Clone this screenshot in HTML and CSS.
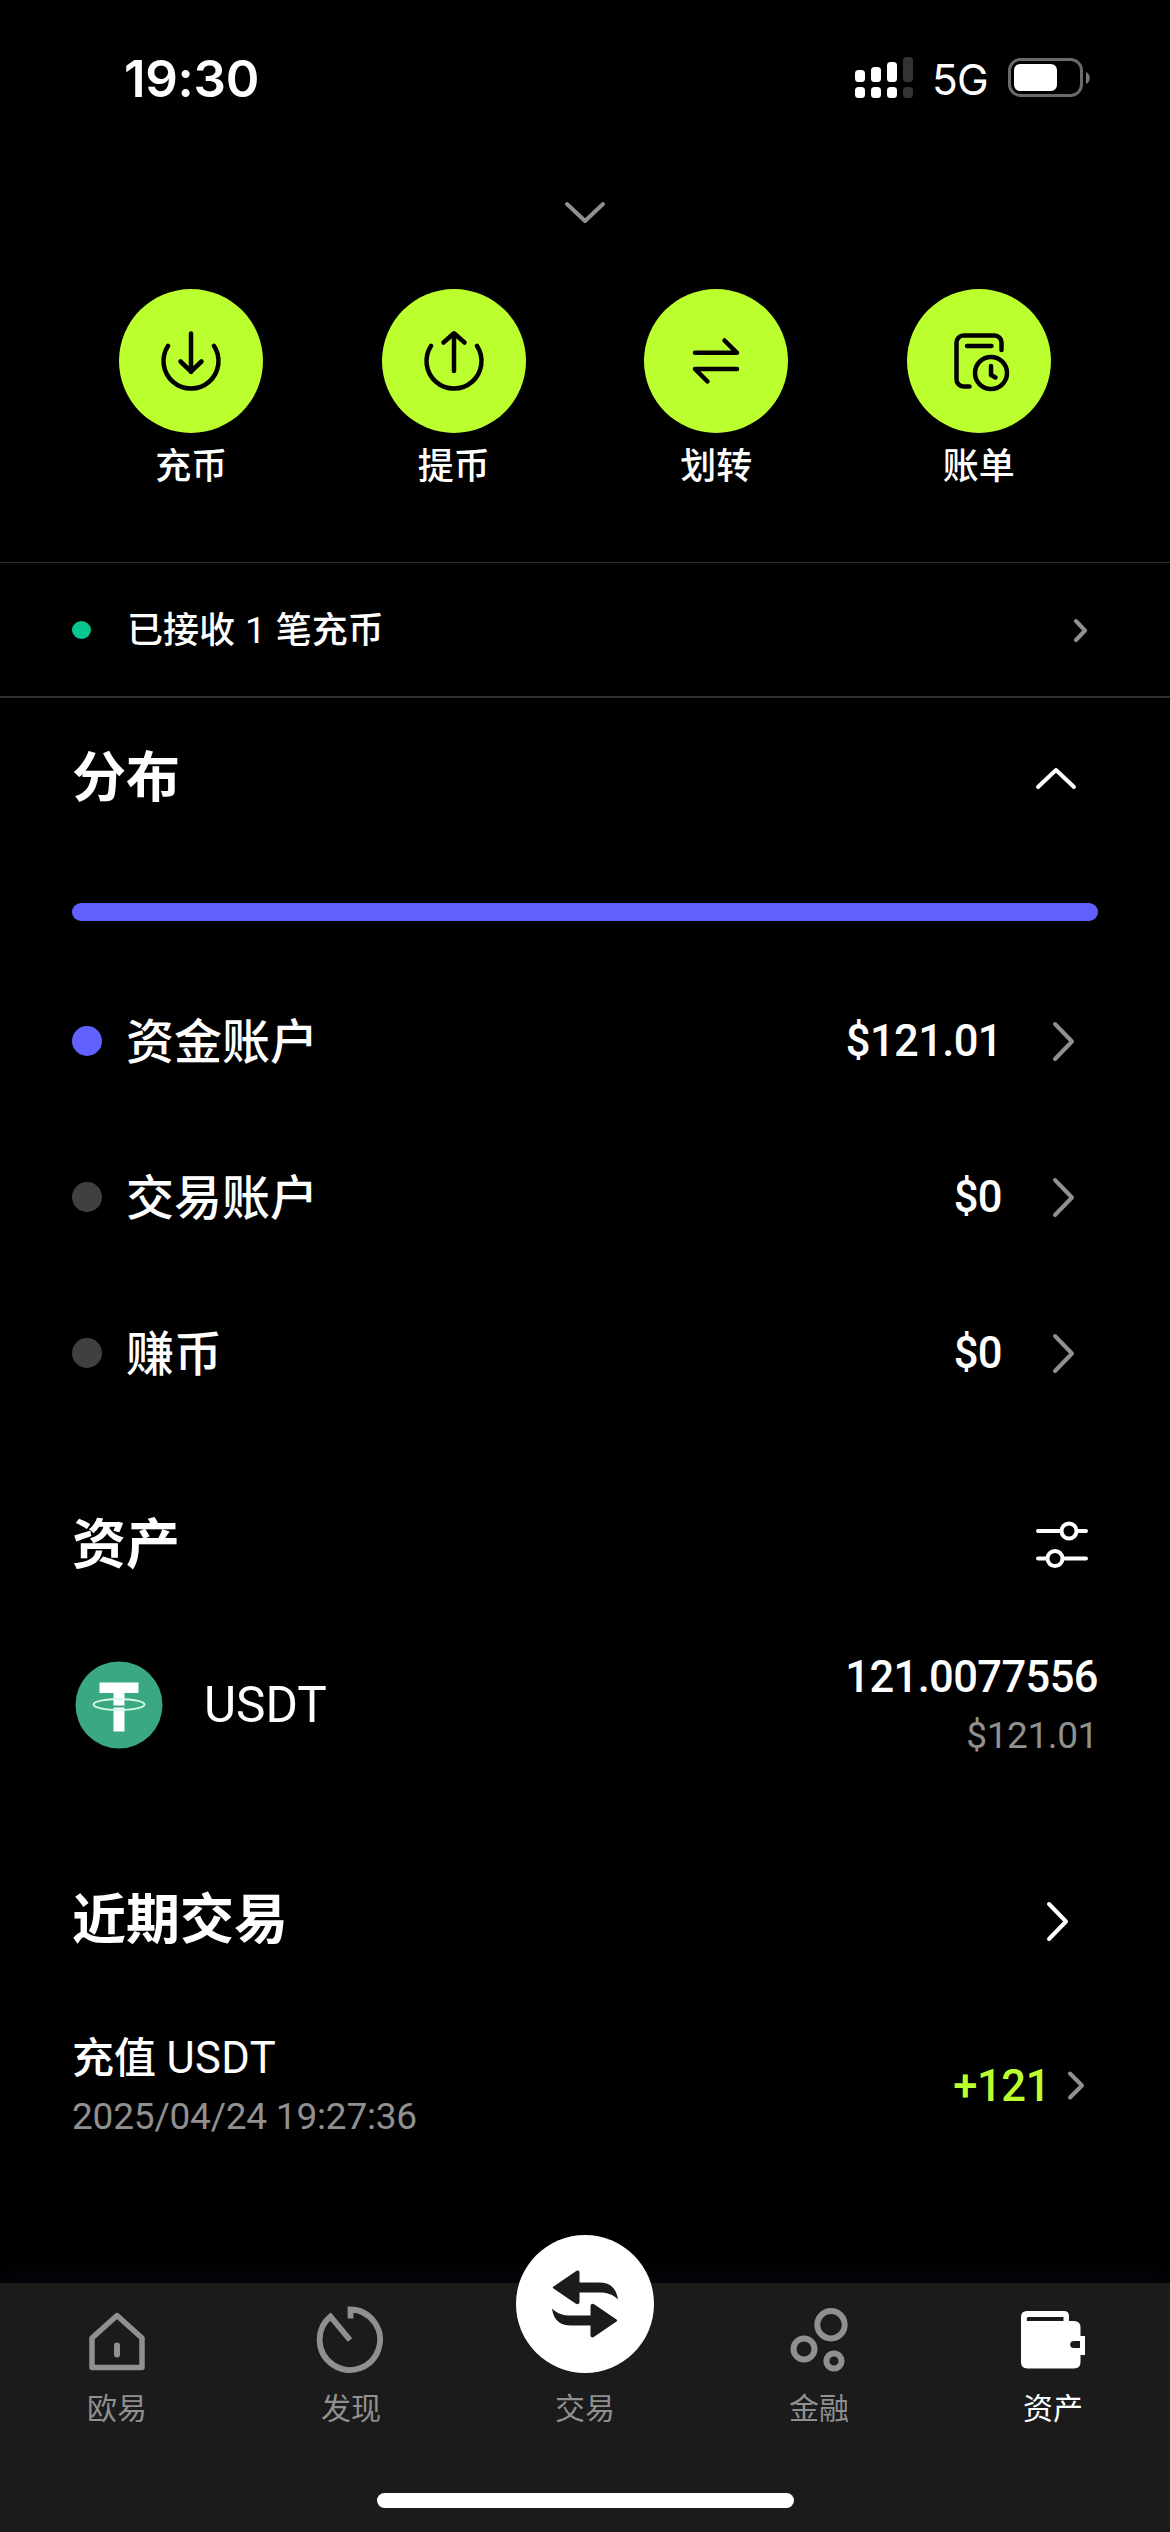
FILE: index.html
```html
<!DOCTYPE html>
<html lang="zh-CN">
<head>
<meta charset="utf-8">
<title>资产</title>
<link rel="stylesheet" href="styles.css">
</head>
<body>
<header class="status">
  <time class="clock">19:30</time>
  <div class="status-right">
    <svg class="signal" width="58" height="42" viewBox="0 0 58 42" fill="#fff">
      <rect x="0" y="13" width="10" height="12" rx="3.5"/><rect x="16" y="10" width="10" height="15" rx="3.5"/><rect x="32" y="5" width="10" height="20" rx="3.5"/><rect x="48" y="0" width="10" height="25" rx="3.5" fill="#333"/>
      <rect x="0" y="30" width="10" height="11" rx="3.5"/><rect x="16" y="30" width="10" height="11" rx="3.5"/><rect x="32" y="30" width="10" height="11" rx="3.5"/><rect x="48" y="30" width="10" height="11" rx="3.5" fill="#333"/>
    </svg>
    <span class="network">5G</span>
    <svg class="battery" width="83" height="40" viewBox="0 0 83 40">
      <rect x="1.5" y="1.5" width="72" height="36" rx="11" fill="none" stroke="#6a6a6a" stroke-width="3"/>
      <rect x="6" y="6" width="43" height="27" rx="6" fill="#fff"/>
      <path d="M78 14c5 2 5 10 0 12z" fill="#7a7a7a"/>
    </svg>
  </div>
</header>

<div class="handle">
  <svg class="line muted" width="44" height="26" viewBox="0 0 44 26"><path d="M4 4l18 17L40 4"/></svg>
</div>

<nav class="actions">
  <a class="action">
    <span class="action-icon"><svg width="72" height="72" viewBox="0 0 72 72"><path d="M13.1 20.8a27.5 27.5 0 1 0 45.8 0M36 8.500v38.500M25.500 36.500L36 46.500l10.500-10"/></svg></span>
    <span>充币</span>
  </a>
  <a class="action">
    <span class="action-icon"><svg width="72" height="72" viewBox="0 0 72 72"><path d="M13.1 20.8a27.500 27.500 0 1 0 45.8 0M36 46V8.500M25.500 17.500L36 8.300l10.500 9.200"/></svg></span>
    <span>提币</span>
  </a>
  <a class="action">
    <span class="action-icon"><svg width="72" height="72" viewBox="0 0 72 72"><path d="M15 27.800h42L44.500 15.500M57 44H15l12.500 12.500"/></svg></span>
    <span>划转</span>
  </a>
  <a class="action">
    <span class="action-icon"><svg width="72" height="72" viewBox="0 0 72 72"><path d="M26.500 61.500h-6a7 7 0 0 1-7-7v-37a7 7 0 0 1 7-7h31a7 7 0 0 1 7 7v7.500M24 21h24.500M48 41v9l4.500 2.500"/><circle cx="48" cy="48" r="16"/></svg></span>
    <span>账单</span>
  </a>
</nav>

<a class="notice">
  <i class="notice-dot"></i>
  <span class="notice-text">已接收 <span class="latin">1</span> 笔充币</span>
  <svg class="line muted notice-arrow" width="16" height="24" viewBox="0 0 16 24"><path d="M4 3l9 9.500-9 9.500"/></svg>
</a>

<main>
  <section>
    <div class="head">
      <h2>分布</h2>
      <svg class="line head-up" width="44" height="26" viewBox="0 0 44 26"><path d="M4 21L22 4l18 17"/></svg>
    </div>
    <div class="bar"></div>
    <ul class="accounts">
      <li><i class="dot dot-on"></i><span class="account-name">资金账户</span><b class="amount">$121.01</b><svg class="line muted" width="26" height="42" viewBox="0 0 26 42"><path d="M4 4l17 17.500L4 39"/></svg></li>
      <li><i class="dot"></i><span class="account-name">交易账户</span><b class="amount">$0</b><svg class="line muted" width="26" height="42" viewBox="0 0 26 42"><path d="M4 4l17 17.500L4 39"/></svg></li>
      <li><i class="dot"></i><span class="account-name">赚币</span><b class="amount">$0</b><svg class="line muted" width="26" height="42" viewBox="0 0 26 42"><path d="M4 4l17 17.500L4 39"/></svg></li>
    </ul>
  </section>

  <section class="assets">
    <div class="head">
      <h2>资产</h2>
      <svg class="line filter" width="54" height="48" viewBox="0 0 54 48"><path d="M3 10h22M42 10h9M3 37.500h8M28 37.500h23"/><circle cx="34" cy="10" r="7.500"/><circle cx="20" cy="37.500" r="7.500"/></svg>
    </div>
    <div class="coin">
      <svg width="88" height="88" viewBox="0 0 88 88">
        <circle cx="44" cy="44" r="43.500" fill="#3aa981"/>
        <path d="M24.500 21.500h39V32H49.500v12.500h-11V32h-14zM38.500 46.500h11v24h-11z" fill="#fff"/>
        <ellipse cx="44" cy="43.500" rx="25.500" ry="5.500" fill="none" stroke="#d5fbea" stroke-width="1.800"/>
      </svg>
      <span class="coin-name">USDT</span>
      <div class="coin-value"><b>121.0077556</b><small>$121.01</small></div>
    </div>
  </section>

  <section class="recent">
    <div class="head">
      <h2>近期交易</h2>
      <svg class="line recent-arrow" width="26" height="42" viewBox="0 0 26 42"><path d="M4 4l17 17.500L4 39"/></svg>
    </div>
    <div class="tx">
      <div class="tx-info"><span>充值 <span class="latin tx-coin">USDT</span></span><time>2025/04/24 19:27:36</time></div>
      <b class="gain">+121</b>
      <svg class="line muted" width="22" height="32" viewBox="0 0 22 32"><path d="M4 4.500l12 12-12 12"/></svg>
    </div>
  </section>
</main>

<footer class="tabbar">
  <nav class="tabs">
    <a class="tab">
      <svg width="72" height="72" viewBox="0 0 72 72" fill="none" stroke="currentColor" stroke-width="5.500" stroke-linejoin="round"><path d="M36 11.500L61 34v29.500H11V34z"/><path d="M36 41.500v9" stroke-linecap="round" stroke-width="6"/></svg>
      <span>欧易</span>
    </a>
    <a class="tab">
      <svg width="72" height="72" viewBox="0 0 72 72" fill="none" stroke="currentColor" stroke-width="5.800"><path d="M35.500 14.500V5.500A30.200 30.200 0 1 1 15.500 12.500L35 36"/></svg>
      <span>发现</span>
    </a>
    <a class="tab">
      <span class="trade"><svg width="72" height="72" viewBox="0 0 72 72" fill="#1b1b1b"><path id="arrow" d="M4.500 18.500L26.500 3.500Q29.500 1.500 30.500 4v10.500H50C61 14.500 67.500 20 69 31.500 63 26 58 24.500 50 24.500H30.500V34.500Q29.500 37.500 26.500 35.500L4.500 20.500Q3 19.500 4.500 18.500z"/><use href="#arrow" transform="rotate(180 36 36)"/></svg></span>
      <span>交易</span>
    </a>
    <a class="tab">
      <svg width="72" height="72" viewBox="0 0 72 72" fill="none" stroke="currentColor" stroke-width="6"><circle cx="48" cy="20.700" r="13.700"/><circle cx="21" cy="45" r="10.500"/><circle cx="51" cy="57" r="7.600"/></svg>
      <span>金融</span>
    </a>
    <a class="tab tab-active">
      <svg width="72" height="72" viewBox="0 0 72 72" fill="currentColor"><path fill-rule="evenodd" d="M10 7h37q5 0 5 5v5h5q6.500 0 6.500 6.500V32H68v19h-4.500v7q0 6.500-6.500 6.500H10.500Q4 64.500 4 58V13q0-6 6-6zM11 13q-1.200 0-1.200 1.500V17H46.500v-4zM57 37q-3.800 0-3.800 3.500T57 44h6v-7z"/></svg>
      <span>资产</span>
    </a>
  </nav>
  <div class="home-indicator"></div>
</footer>
</body>
</html>
```
FILE: styles.css
```css
* { box-sizing: border-box; margin: 0; padding: 0; }

body {
  width: 1170px;
  height: 2532px;
  display: flex;
  flex-direction: column;
  overflow: hidden;
  background: #000;
  color: #fff;
  font-family: Roboto, "Noto Sans CJK SC", sans-serif;
  font-weight: 500;
}

svg { display: block; flex: none; }
b { font-weight: 500; }
ul { list-style: none; }

.line { fill: none; stroke: #fff; stroke-width: 4; stroke-linecap: round; stroke-linejoin: round; }
.muted { stroke: #909090; }
.latin { font-weight: 400; }

/* Status bar */
.status {
  height: 156px;
  padding: 0 79px 0 124px;
  display: flex;
  align-items: center;
  justify-content: space-between;
  font-family: Inter, sans-serif;
}
.clock { font-size: 51px; font-weight: 600; letter-spacing: -0.3px; }
.status-right { display: flex; align-items: center; }
.network { margin-left: 19px; width: 76px; padding-top: 2px; font-size: 42.5px; font-weight: 400; letter-spacing: -0.8px; }

.handle { height: 113px; display: flex; align-items: center; justify-content: center; }

/* Quick actions */
.actions {
  height: 293px;
  padding: 20px 60px 0;
  display: grid;
  grid-template-columns: repeat(4, 1fr);
}
.action { display: flex; flex-direction: column; align-items: center; gap: 8px; font-size: 36px; line-height: 52px; }
.action-icon {
  width: 144px;
  height: 144px;
  display: flex;
  align-items: center;
  justify-content: center;
  border-radius: 50%;
  background: #bcff2f;
}
.action-icon svg { fill: none; stroke: #000; stroke-width: 4.5; stroke-linecap: round; stroke-linejoin: round; }

/* Deposit notice */
.notice {
  height: 136px;
  padding: 0 82px 0 72px;
  display: flex;
  align-items: center;
  border-top: 1px solid #303030;
  border-bottom: 2px solid #303030;
  font-size: 36px;
}
.notice-dot { width: 19px; height: 18px; margin-right: 36px; border-radius: 50%; background: #07c68f; }
.notice-text { padding-bottom: 6px; }
.notice-text .latin { margin: 0 1px; font-size: 37px; }
.notice-arrow { margin-left: auto; }

/* Sections */
main { padding: 0 72px; }
.head { height: 156px; display: flex; align-items: center; justify-content: space-between; }
h2 { padding-top: 5px; font-size: 54px; line-height: 80px; font-weight: 700; }
.head-up { margin: 6px 20px 0 0; }
.bar { height: 18px; margin-top: 49px; border-radius: 9px; background: #6161ff; }

.accounts { margin-top: 42px; }
.accounts li { height: 156px; padding-right: 21px; display: flex; align-items: center; font-size: 48px; }
.account-name { padding-bottom: 6px; }
.dot { width: 30px; height: 30px; margin-right: 24px; border-radius: 50%; background: #404040; }
.dot-on { background: #6161ff; }
.amount { margin: 0 49px 0 auto; font-size: 43.5px; letter-spacing: -0.6px; }

.assets { margin-top: 34px; }
.filter { margin: 4px 9px 0 0; }
.coin { height: 156px; margin-top: 6px; padding-left: 3px; display: flex; align-items: center; }
.coin-name { margin-left: 41px; font-size: 49.5px; font-weight: 400; }
.coin-value { margin-left: auto; padding-top: 4px; display: flex; flex-direction: column; align-items: flex-end; font-size: 43.5px; line-height: 58px; letter-spacing: -0.6px; }
.coin-value small { font-size: 37px; font-weight: 400; letter-spacing: -0.4px; color: #909090; }

.recent { margin-top: 57px; }
.recent-arrow { margin: 6px 27px 0 0; }
.tx { height: 120px; margin-top: 29px; padding-right: 10px; display: flex; align-items: center; }
.tx-info { padding-top: 4px; display: flex; flex-direction: column; font-size: 42px; line-height: 60px; }
.tx-coin { font-size: 43.5px; letter-spacing: 0.4px; }
.tx-info time { font-size: 37px; line-height: 56px; font-weight: 400; letter-spacing: -0.2px; color: #909090; }
.gain { margin: 2px 16px 0 auto; font-size: 43.5px; letter-spacing: -0.4px; color: #bcff2f; }

/* Tab bar */
.tabbar {
  height: 249px;
  margin-top: auto;
  background: #1b1b1b;
  box-shadow: 0 -4px 24px #080a14;
}
.tabs { height: 210px; display: grid; grid-template-columns: repeat(5, 1fr); }
.tab {
  display: flex;
  flex-direction: column;
  align-items: center;
  padding-top: 21px;
  gap: 12px;
  color: #909090;
  font-size: 30px;
  line-height: 42px;
  font-weight: 400;
}
.tab-active { color: #fff; }
.trade {
  width: 138px;
  height: 138px;
  margin-top: -69px;
  margin-bottom: 3px;
  display: flex;
  align-items: center;
  justify-content: center;
  border-radius: 50%;
  background: #fff;
}
.home-indicator { width: 417px; height: 15px; margin: 0 auto; border-radius: 8px; background: #fff; }
```
